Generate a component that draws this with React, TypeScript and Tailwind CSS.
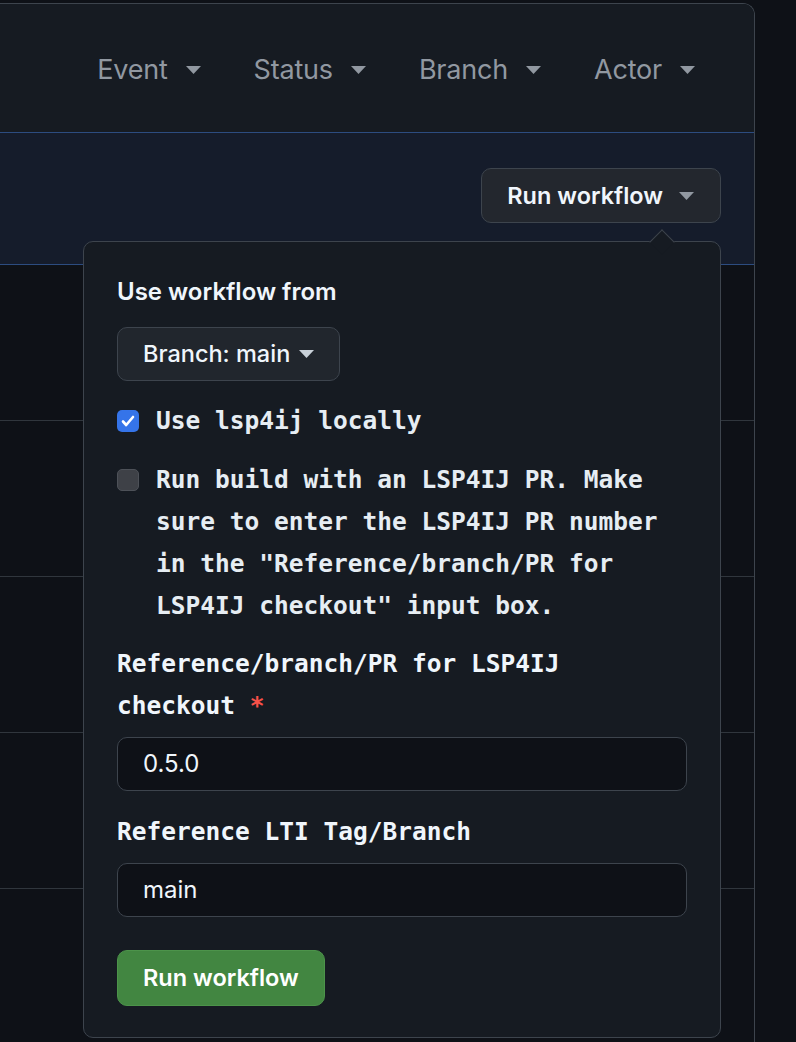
import type { ReactNode } from 'react';

const sans = { fontFamily: 'Inter, "Noto Sans", sans-serif' };
const mono = { fontFamily: '"DejaVu Sans Mono", "Liberation Mono", monospace' };

function Caret({ className = '' }: { className?: string }) {
  return (
    <svg width="15" height="8" viewBox="0 0 15 8" className={className} fill="currentColor">
      <path d="M0 0h15L7.5 8z" />
    </svg>
  );
}

function Filter({ label }: { label: string }) {
  return (
    <div className="flex items-center gap-[18px] text-[#9198a1]">
      <span className="text-[27px] tracking-[-0.2px]">{label}</span>
      <Caret />
    </div>
  );
}

function CheckRow({ checked, children }: { checked: boolean; children: ReactNode }) {
  return (
    <div className="flex items-start gap-[17px]">
      <div
        className={
          checked
            ? 'mt-[10px] w-[22px] h-[22px] shrink-0 rounded-[5px] bg-[#3574e9] flex items-center justify-center'
            : 'mt-[10px] w-[22px] h-[22px] shrink-0 rounded-[5px] bg-[#3e4147] border border-[#4d5158]'
        }
      >
        {checked && (
          <svg width="14" height="12" viewBox="0 0 14 12" fill="none" stroke="white" strokeWidth="2.6" strokeLinecap="round" strokeLinejoin="round">
            <path d="M2 6.5l3.2 3.5L12 2" />
          </svg>
        )}
      </div>
      <div className="text-[24.5px] leading-[42px] font-bold text-[#e6edf3]" style={mono}>
        {children}
      </div>
    </div>
  );
}

export default function App() {
  return (
    <div className="relative h-[1042px] overflow-hidden bg-[#0e1117]" style={sans}>
      <div className="w-[755px] h-[1060px] mt-[3px] border-t border-r border-[#3d444d] rounded-tr-[12px] overflow-hidden">
        <div className="h-[129px] bg-[#161b22] flex items-center justify-end gap-[53px] pr-[59px] pt-[4px] border-b border-[#2c4c80]">
          <Filter label="Event" />
          <Filter label="Status" />
          <Filter label="Branch" />
          <Filter label="Actor" />
        </div>
        <div className="h-[132px] bg-[#151c2b] border-b border-[#2c4c80] flex items-start justify-end pr-[33px] pt-[35px]">
          <button className="h-[55px] pl-[25px] pr-[26px] flex items-center gap-[16px] rounded-[10px] bg-[#23272e] border border-[#3d444d] text-[#f0f6fc] text-[23.5px] font-semibold">
            Run workflow
            <Caret className="text-[#9198a1]" />
          </button>
        </div>
        <div className="bg-[#0e1117]">
          <div className="h-[156px] border-b border-[#30363d]" />
          <div className="h-[156px] border-b border-[#30363d]" />
          <div className="h-[156px] border-b border-[#30363d]" />
          <div className="h-[156px] border-b border-[#30363d]" />
          <div className="h-[156px]" />
        </div>
      </div>

      <div className="absolute left-[83px] top-[241px] w-[638px] h-[797px] rounded-[10px] border border-[#3d444d] bg-[#161b22] px-[33px] pt-[32px] text-[#f0f6fc]">
        <div className="absolute -top-[9px] left-[569px] w-[18px] h-[18px] rotate-45 bg-[#161b22] border-t border-l border-[#3d444d]" />
        <div className="h-[36px] leading-[36px] text-[24px] font-semibold">Use workflow from</div>
        <button className="mt-[17px] h-[54px] px-[25px] flex items-center gap-[9px] rounded-[10px] bg-[#21262d] border border-[#3d444d] text-[23.5px] font-medium">
          Branch: main
          <Caret className="text-[#c9d1d9]" />
        </button>
        <div className="mt-[19px]">
          <CheckRow checked>Use lsp4ij locally</CheckRow>
        </div>
        <div className="mt-[17px]">
          <CheckRow checked={false}>
            Run build with an LSP4IJ PR. Make
            <br />
            sure to enter the LSP4IJ PR number
            <br />
            in the "Reference/branch/PR for
            <br />
            LSP4IJ checkout" input box.
          </CheckRow>
        </div>
        <div className="mt-[16px] text-[24.5px] leading-[42px] font-bold" style={mono}>
          Reference/branch/PR for LSP4IJ
          <br />
          checkout <span className="text-[#f85149]">*</span>
        </div>
        <div className="mt-[10px] h-[54px] rounded-[10px] border border-[#3d444d] bg-[#0e1117] px-[25px] flex items-center text-[24px]">
          0.5.0
        </div>
        <div className="mt-[20px] text-[24.5px] leading-[42px] font-bold" style={mono}>
          Reference LTI Tag/Branch
        </div>
        <div className="mt-[10px] h-[54px] rounded-[10px] border border-[#3d444d] bg-[#0e1117] px-[25px] flex items-center text-[24px]">
          main
        </div>
        <button className="mt-[33px] h-[56px] px-[25px] rounded-[10px] bg-[#428641] border border-[#4c934a] text-white text-[23.5px] font-semibold">
          Run workflow
        </button>
      </div>
    </div>
  );
}
